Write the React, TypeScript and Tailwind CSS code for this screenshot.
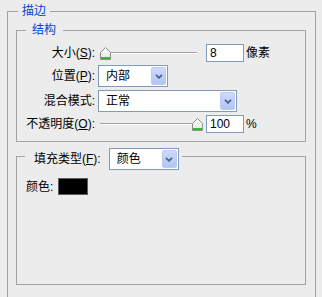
import React from "react"

const font = "font-['Liberation_Sans','Noto_Sans_CJK_SC',sans-serif]"

function Thumb() {
  return (
    <svg width="11" height="13" viewBox="0 0 11 13">
      <defs>
        <linearGradient id="tg" x1="0" y1="0" x2="0" y2="1">
          <stop offset="0" stopColor="#ffffff" />
          <stop offset="1" stopColor="#e3e3dc" />
        </linearGradient>
      </defs>
      <path d="M0.5 5.5 L5.5 0.5 L10.5 5.5 V12.5 H0.5 Z" fill="url(#tg)" stroke="#8c9088" />
      <rect x="1" y="10" width="9" height="2" fill="#3cb43c" />
    </svg>
  )
}

function Slider({ atEnd }: { atEnd?: boolean }) {
  return (
    <div className="relative w-[103px] h-[18px] ml-[5px]">
      <div className="absolute left-0 right-[6px] top-[8px] h-[2px] border-t border-[#a3a3a3] bg-white" />
      <div className={"absolute top-[3px] " + (atEnd ? "right-0" : "left-0")}>
        <Thumb />
      </div>
    </div>
  )
}

function Arrow() {
  return (
    <div className="w-[15px] h-[18px] mr-[1px] rounded-[2px] border border-[#bccbf0] bg-gradient-to-b from-[#cdd9fb] to-[#b1c5f4] flex items-center justify-center">
      <svg width="8" height="5" viewBox="0 0 8 5">
        <path d="M1 0.8 L4 3.8 L7 0.8" fill="none" stroke="#4d6185" strokeWidth="1.8" />
      </svg>
    </div>
  )
}

function Combo({ w, text }: { w: string; text: string }) {
  return (
    <div className={"flex items-center h-[22px] border border-[#7f9db9] bg-white " + w}>
      <span className="flex-1 pl-[7px] text-[12px] leading-[12px]">{text}</span>
      <Arrow />
    </div>
  )
}

function Num({ value }: { value: string }) {
  return (
    <div className="w-[38px] h-[18px] border border-[#7f9db9] bg-white pl-[3px] flex items-center text-[12px] leading-[12px]">
      {value}
    </div>
  )
}

function Label({ text, hot, w = "w-[78px] text-right" }: { text: string; hot?: string; w?: string }) {
  return (
    <span className={"text-[12px] leading-[12px] whitespace-nowrap " + w}>
      {text}
      {hot && (
        <>
          (<span className="underline">{hot}</span>)
        </>
      )}
      :
    </span>
  )
}

export default function App() {
  return (
    <div className={"w-[322px] h-[297px] overflow-hidden bg-[#ececec] text-black " + font}>
      <fieldset className="mt-[5px] ml-[7px] w-[309px] h-[320px] border border-[#a2a2a2] pl-[8px] pr-[9px]">
        <legend className="ml-[2px] px-[4px] text-[12px] leading-[12px] text-[#0046d5]">描边</legend>

        <fieldset className="mt-[7px] border border-[#a2a2a2] pt-[8px] pb-[8px]">
          <legend className="ml-[9px] pl-[6px] pr-[7px] text-[12px] leading-[12px] text-[#0046d5]">结构</legend>

          <div className="flex items-center h-[18px]">
            <Label text="大小" hot="S" />
            <Slider />
            <div className="ml-[3px]"><Num value="8" /></div>
            <span className="ml-[2px] text-[12px] leading-[12px]">像素</span>
          </div>

          <div className="flex items-center h-[22px] mt-[3px]">
            <Label text="位置" hot="P" />
            <div className="ml-[3px]"><Combo w="w-[70px]" text="内部" /></div>
          </div>

          <div className="flex items-center h-[22px] mt-[3px]">
            <Label text="混合模式" />
            <div className="ml-[3px]"><Combo w="w-[139px]" text="正常" /></div>
          </div>

          <div className="flex items-center h-[18px] mt-[3px]">
            <Label text="不透明度" hot="O" />
            <Slider atEnd />
            <div className="ml-[3px]"><Num value="100" /></div>
            <span className="ml-[2px] text-[12px] leading-[12px]">%</span>
          </div>
        </fieldset>

        <fieldset className="mt-[6px] h-[137px] border border-[#a2a2a2]">
          <legend className="ml-[8px] pl-[9px] pr-[3px] h-[16px]">
            <div className="flex items-center h-[22px]">
              <Label text="填充类型" hot="F" w="" />
              <div className="ml-[8px]"><Combo w="w-[70px]" text="颜色" /></div>
            </div>
          </legend>

          <div className="flex items-center pl-[9px] pt-[14px]">
            <span className="text-[12px] leading-[12px]">颜色:</span>
            <div className="ml-[5px] w-[30px] h-[17px] bg-black border border-[#5c5c5c]" />
          </div>
        </fieldset>
      </fieldset>
    </div>
  )
}
